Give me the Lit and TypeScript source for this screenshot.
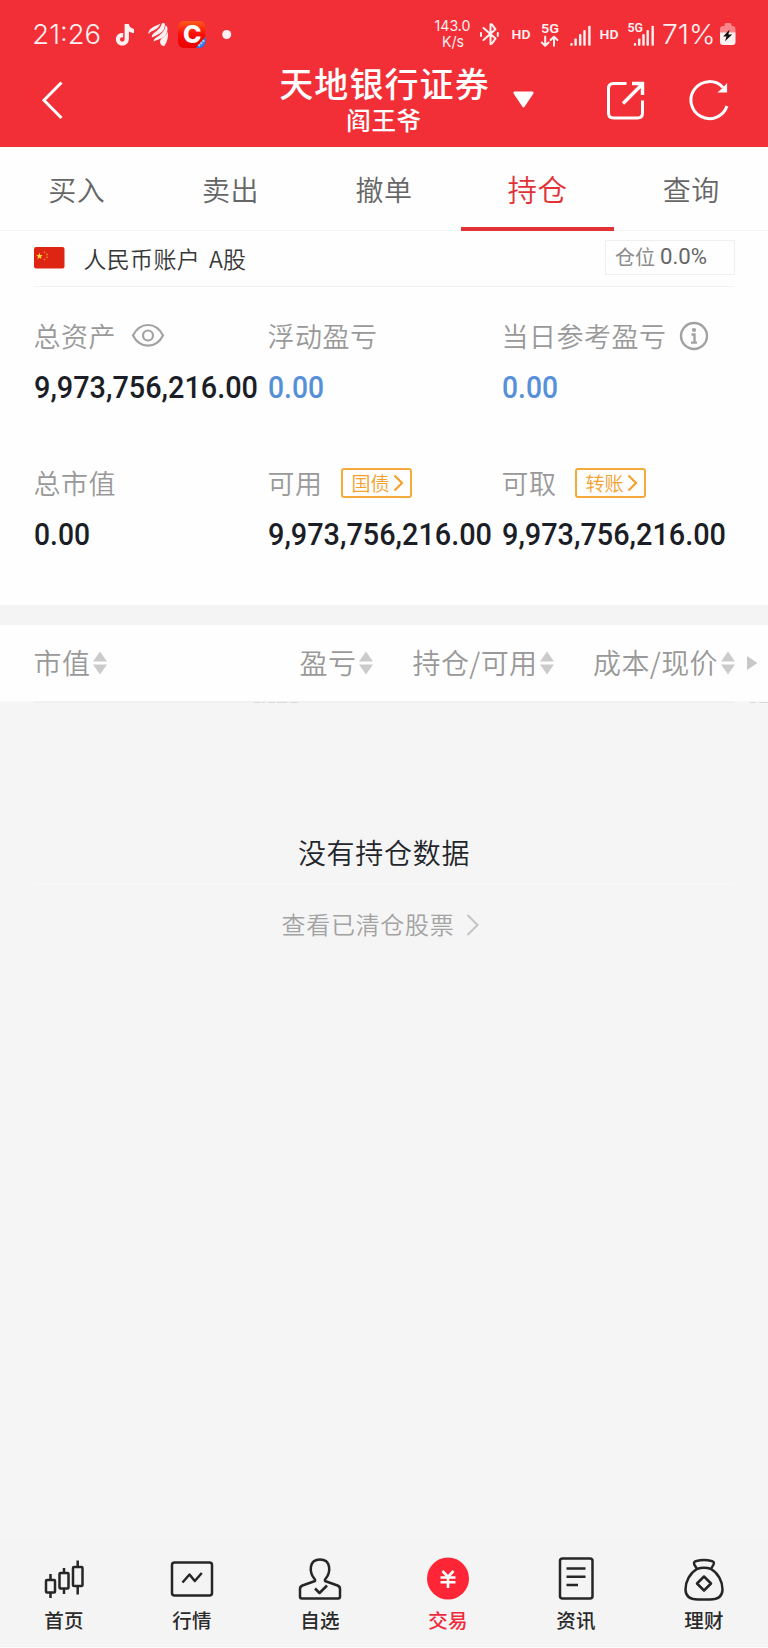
import { LitElement, html, svg, css } from "lit";
import { customElement, property } from "lit/decorators.js";

/** One line of figures set to a fixed width. */
const figures = (text: string, width: number, cls = "") => html`
  <svg class="figures ${cls}" width=${width + 2} height="36" viewBox="0 0 ${width + 2} 36">
    <text x="0" y="28.5" textLength=${width} lengthAdjust="spacingAndGlyphs">${text}</text>
  </svg>`;

const sorter = html`<svg class="sorter" width="14" height="24" viewBox="0 0 14 24">
  <path d="M7 .5 14 10.5H0ZM7 23.5 14 13.5H0Z" fill="#cbcbcb" /></svg>`;

const bars = (xs: number[]) =>
  xs.map((x, i) => svg`<rect x=${x} y=${[43, 38.4, 34, 30, 25.7][i]} width="2.4" height=${45.7 - [43, 38.4, 34, 30, 25.7][i]} rx=".9" />`);

@customElement("status-bar")
export class StatusBar extends LitElement {
  static styles = css`
    :host { display: flex; justify-content: space-between; height: 60px; }
    svg { display: block; fill: #fff1f1; }
    text { font-family: Inter, "Open Sans", sans-serif; }
    .clock { font-size: 27.5px; font-weight: 350; }
    .rate { font-size: 15px; font-weight: 400; }
    .tag { font-family: Roboto, sans-serif; font-size: 13.5px; font-weight: 600; }
    .small { font-size: 12px; }
    .logo { font-family: Inter, sans-serif; font-size: 25px; font-weight: 800; fill: #fff; }
    .line { fill: none; stroke: #fff1f1; stroke-width: 2; stroke-linecap: round; stroke-linejoin: round; }
  `;
  render() {
    return html`
      <svg width="240" height="60" viewBox="0 0 240 60">
        <defs><linearGradient id="g" x1="0" y1="0" x2="0" y2="1">
          <stop offset="0" stop-color="#ff5a1c" /><stop offset=".5" stop-color="#fb0d08" /><stop offset="1" stop-color="#e80000" />
        </linearGradient><clipPath id="c"><rect x="178" y="21" width="27.5" height="27" rx="6" /></clipPath></defs>
        <text class="clock" x="32.300" y="43.800" textLength="68.700" lengthAdjust="spacingAndGlyphs">21:26</text>
        <path d="M124.600 24h4.200c.3 2.600 2.200 4.500 5.200 4.900v4.100c-2 0-3.700-.6-5.100-1.500v6.900c0 4.400-3 7.200-6.700 7.200-3.600 0-6.300-2.800-6.300-6.300 0-4 3.200-6.700 7.300-6.300v4.300c-1.900-.4-3.200.6-3.200 2.100 0 1.300 1 2.200 2.200 2.200 1.500 0 2.400-1 2.400-2.700Z" />
        <path d="M148.500 34.500c-.8-5.500 5.500-8.500 12-10.800-2.400 5.500-6.300 6.200-9.200 7.900-1.200.7-2.200 1.600-2.800 2.900Z" />
        <path d="M151.800 37.500c-.2-6 8-5.600 10.200-14.300 1.300-.3 2.400-.1 3 .6-.3 8.600-5.200 9.600-9.300 11.900-1.600.8-2.900 1.300-3.900 1.800Z" />
        <path d="M153.800 41.600c-.3-5.500 9.900-5 11.900-16.400 1.200.8 1.700 2 1.800 3.300-.2 8-5 9.700-9.500 11.200-1.600.5-3.100 1.100-4.200 1.900Z" />
        <path d="M160.200 43c-1.200-5.500 5.700-5 7.700-11.500.5 6.500-1 11-3.800 14.700-1.900-.4-3.500-1.300-3.900-3.200Z" />
        <g clip-path="url(#c)"><rect x="178" y="21" width="27.500" height="27" fill="url(#g)" />
          <path d="M206 36v13h-11Z" fill="#2d78e6" /><path d="m198.500 46 6-6" stroke="#a9ccff" stroke-width="2.200" stroke-dasharray="2 1" />
        </g>
        <text class="logo" x="183" y="43.300" textLength="18.500" lengthAdjust="spacingAndGlyphs">C</text>
        <circle cx="226.700" cy="34.500" r="4.500" />
      </svg>
      <svg width="340" height="60" viewBox="428 0 340 60">
        <text class="rate" x="434.500" y="31.300" textLength="36" lengthAdjust="spacingAndGlyphs">143.0</text>
        <text class="rate" x="442" y="47.200" textLength="22" lengthAdjust="spacingAndGlyphs">K/s</text>
        <path class="line" d="M483.500 28 495.500 38.600 491.800 43.600 490.500 44.200V24.200L491.800 24.300 495.500 29.300 483.500 40" />
        <path class="line" d="M481 33v3M497.800 33v3" />
        <text class="tag" x="511.500" y="38.600" textLength="19" lengthAdjust="spacingAndGlyphs">HD</text>
        <text class="tag" x="541" y="33" textLength="18" lengthAdjust="spacingAndGlyphs">5G</text>
        <path class="line" d="M545.200 36.500v9M541.800 42.500l3.400 3.200 3.400-3.200M554 45.700v-9M550.600 40l3.400-3.200 3.400 3.200" />
        ${bars([570.3, 574.4, 579, 583.3, 588.2])}
        <text class="tag" x="599.500" y="38.600" textLength="19" lengthAdjust="spacingAndGlyphs">HD</text>
        <text class="tag small" x="627.500" y="32" textLength="15.500" lengthAdjust="spacingAndGlyphs">5G</text>
        ${bars([633.8, 638, 642.3, 646.5, 651.5])}
        <text class="clock" x="662" y="43.800" textLength="53.500" lengthAdjust="spacingAndGlyphs">71%</text>
        <path d="M724.500 26v-1.500q0-1.500 1.500-1.500h4q1.500 0 1.500 1.500V26h1q3 0 3 3v4h-15.500v-4q0-3 3-3Z" fill="#fb8588" />
        <path d="M720 32.500h15.500V42q0 3-3 3H723q-3 0-3-3Z" />
        <path d="m729.500 29.500-6.300 7h3.300l-1.500 4.800 7.200-6.800h-3.800Z" fill="#141414" />
      </svg>`;
  }
}

@customElement("title-bar")
export class TitleBar extends LitElement {
  static styles = css`
    :host { display: grid; grid-template-columns: 279px 210px 279px; height: 87px; color: #fff; }
    svg { display: block; fill: none; stroke: #fff; stroke-width: 3; }
    .back { padding: 20px 0 0 41px; }
    .names { text-align: center; font-family: "Noto Sans CJK SC", sans-serif; font-weight: 500; white-space: nowrap; }
    .title { font-size: 34px; letter-spacing: 1.100px; margin-right: -1px; line-height: 45px; }
    .sub { font-size: 24.500px; letter-spacing: .6px; line-height: 29px; }
    .tools { display: flex; padding: 20px 0 0 24px; }
    .caret { margin-top: 11px; fill: #fff; stroke: none; }
    .share { margin-left: 71px; }
    .refresh { margin-left: 43px; }
  `;
  render() {
    return html`
      <div class="back"><svg width="22" height="40" viewBox="0 0 22 40"><path d="M20.500 2.500 3 20.200 20.500 38" /></svg></div>
      <div class="names"><div class="title">天地银行证券</div><div class="sub">阎王爷</div></div>
      <div class="tools">
        <svg class="caret" width="21" height="17" viewBox="0 0 21 17"><path d="M1.500 .5h18q1.800.5.8 2.200L11.700 15.500q-1.200 1.800-2.400 0L.7 2.700Q-.3 1 1.500.5Z" /></svg>
        <svg class="share" width="40" height="40" viewBox="0 0 40 40">
          <path d="M21.500 3.500H8.500q-5 0-5 5v24.500q0 5 5 5h24q5 0 5-5V20.500" /><path d="M27 3.500h10.500V15M18 23.500 37 4.500" stroke-width="3.400" /></svg>
        <svg class="refresh" width="44" height="42" viewBox="0 0 44 42">
          <path d="M39 26A18.500 18.500 0 1 1 35 7.500" /><path d="M38.500 4.500v7.500H31L35 8.500Z" fill="#fff" stroke-width="1.200" /></svg>
      </div>`;
  }
}

@customElement("trade-tabs")
export class TradeTabs extends LitElement {
  @property({ type: Array }) tabs = ["买入", "卖出", "撤单", "持仓", "查询"];
  @property({ type: Number }) active = 3;
  static styles = css`
    :host { display: grid; grid-template-columns: repeat(5, 1fr); height: 83px; border-bottom: 1.500px solid #f5f5f5; box-sizing: border-box; margin-top: 1px; }
    .tab { box-sizing: border-box; height: 83px; text-align: center; font: 350 28px/82px "Noto Sans CJK SC", sans-serif; letter-spacing: .5px; color: #666; }
    .on { font-size: 29.500px; line-height: 80px; color: #e23236; border-bottom: 4px solid #e23236; }
  `;
  render() {
    return this.tabs.map((t, i) => html`<div class="tab ${i === this.active ? "on" : ""}">${t}</div>`);
  }
}

@customElement("account-row")
export class AccountRow extends LitElement {
  static styles = css`
    :host { display: flex; align-items: flex-start; height: 56px; margin: 0 33px; box-sizing: border-box; border-bottom: 1px solid #f2f2f2; font-family: "Noto Sans CJK SC", sans-serif; }
    .flag { display: block; margin: 16px 0 0 .5px; }
    .name { margin-left: 19px; font-size: 23px; line-height: 34px; padding-top: 10px; letter-spacing: .3px; word-spacing: 3.500px; color: #383838; font-weight: 350; white-space: pre; }
    .box { box-sizing: border-box; display: flex; margin: 9px 0 0 auto; width: 130px; height: 35px; border: 1.500px solid #efefef; padding-left: 9px; color: #8c8c8c; font-size: 20px; line-height: 31px; }
    .pct { margin-left: 5px; fill: #666; font: 400 22px Roboto, sans-serif; }
  `;
  render() {
    return html`
      <svg class="flag" width="31" height="22" viewBox="0 0 31 22">
        <rect width="30.500" height="21.500" rx="2" fill="#de2412" />
        <path d="m5.500 5.800.9 2.100 2.300.2-1.700 1.500.5 2.300-2-1.200-2 1.200.5-2.300-1.700-1.500 2.300-.2Z" fill="#ffd83b" />
        <g fill="#f08a2a"><circle cx="10.500" cy="5.300" r=".9" /><circle cx="13" cy="7.400" r=".9" /><circle cx="13" cy="10.300" r=".9" /><circle cx="10.500" cy="12.600" r=".9" /></g>
      </svg>
      <div class="name">人民币账户 A股</div>
      <div class="box">仓位<svg class="pct" width="50" height="31" viewBox="0 0 50 31"><text x="0" y="23" textLength="47" lengthAdjust="spacingAndGlyphs">0.0%</text></svg></div>`;
  }
}

@customElement("asset-panel")
export class AssetPanel extends LitElement {
  static styles = css`
    :host { display: grid; grid-template-columns: 234px 234px 1fr; grid-template-rows: 147px 147px; height: 318px; padding: 29.500px 0 0 33.500px; box-sizing: border-box; }
    .label { display: flex; align-items: center; height: 38px; font: 350 27px/38px "Noto Sans CJK SC", sans-serif; letter-spacing: .5px; color: #999; white-space: nowrap; }
    .figures { display: block; margin-top: 14.500px; fill: #1b1e26; font: 500 32px Roboto, sans-serif; overflow: visible; }
    .blue { fill: #5690d8; }
    .icon { fill: none; stroke: #a2a2a2; stroke-width: 2.200; margin-left: 15px; margin-top: 1px; }
    .info { margin-left: 12px; stroke-width: 2.400; margin-top: 0; }
    .chip { display: flex; align-items: center; box-sizing: border-box; height: 30px; width: 71px; margin: 0 0 0 18px; padding-left: 9px; border: 2px solid #f5aa3c; border-radius: 3px; font-size: 19px; line-height: 26px; letter-spacing: 0; color: #f5a12d; }
    .chev { margin-left: 3px; fill: none; stroke: #f5a12d; stroke-width: 2.200; }
  `;
  chip(t: string) {
    return html`<span class="chip">${t}<svg class="chev" width="12" height="18" viewBox="0 0 12 18"><path d="m1.500 1.500 7.500 7.500-7.500 7.500" /></svg></span>`;
  }
  render() {
    return html`
      <div><div class="label">总资产<svg class="icon" width="34" height="26" viewBox="0 0 34 26">
        <path d="M2 12.500C9-1.500 25-1.500 32 12.500 25 26 9 26 2 12.500Z" /><circle cx="17" cy="12.500" r="5" /></svg></div>${figures("9,973,756,216.00", 224)}</div>
      <div><div class="label">浮动盈亏</div>${figures("0.00", 56, "blue")}</div>
      <div><div class="label">当日参考盈亏<svg class="icon info" width="30" height="30" viewBox="0 0 30 30">
        <circle cx="15" cy="15" r="13" /><circle cx="15" cy="9" r="2.100" fill="#a2a2a2" stroke="none" /><path d="M12.500 13.500H15.500V21.500M12 21.600H18" /></svg></div>${figures("0.00", 56, "blue")}</div>
      <div><div class="label">总市值</div>${figures("0.00", 56)}</div>
      <div><div class="label">可用${this.chip("国债")}</div>${figures("9,973,756,216.00", 224)}</div>
      <div><div class="label">可取${this.chip("转账")}</div>${figures("9,973,756,216.00", 224)}</div>`;
  }
}

@customElement("holding-list")
export class HoldingList extends LitElement {
  static styles = css`
    :host { display: block; border-top: 20px solid #f4f4f4; font-family: "Noto Sans CJK SC", sans-serif; }
    .head { display: grid; grid-template-columns: 266px 113px 180.500px 154px 19px; padding-left: 33.500px; height: 76px; align-items: center; background: #fefefe; color: #999; font-size: 28px; letter-spacing: .4px; font-weight: 350; line-height: 40px; white-space: nowrap; box-sizing: border-box; padding-bottom: 3px; }
    .col { display: flex; align-items: center; }
    .sorter { margin: 3px 0 0 3px; }
    .more { margin-top: 3px; }
    .rule { display: block; }
    .empty { padding-top: 124px; text-align: center; color: #22252b; font-size: 28px; letter-spacing: .7px; line-height: 50px; font-weight: 350; height: 180px; box-sizing: border-box; }
    .line { height: 2px; margin: 0 33px; background: #f7f7f7; }
    .cleared { display: flex; justify-content: center; align-items: center; height: 76px; color: #a3a3a3; font-size: 24px; letter-spacing: .7px; font-weight: 350; padding-right: 6px; }
    .chev { margin: 3px 0 0 12px; fill: none; stroke: #c4c4c4; stroke-width: 2; }
  `;
  render() {
    return html`
      <div class="head">
        ${["市值", "盈亏", "持仓/可用", "成本/现价"].map((t) => html`<div class="col">${t}${sorter}</div>`)}
        <svg class="more" width="11" height="14" viewBox="0 0 11 14"><path d="M0 0 10.500 7 0 14Z" fill="#c8c8c8" /></svg>
      </div>
      <svg class="rule" width="768" height="2" viewBox="0 0 768 2"><rect width="768" height="2" fill="#f7f7f7" /><rect x="34" width="700" height="2" fill="#f1f1f1" />
        <path d="M254 1.500h6m2 0h3m3 0h7m2 0h10m3 0h8M750 1.500h6m3 0h9" stroke="#dadada" /></svg>
      <div class="empty">没有持仓数据</div>
      <div class="line"></div>
      <div class="cleared">查看已清仓股票<svg class="chev" width="14" height="22" viewBox="0 0 14 22"><path d="m1.500 1 10 10-10 10" /></svg></div>`;
  }
}

const navIcons = [
  svg`<path d="M10.500 22v6M10.500 40v6M24 16v5M24 36v6M37.700 8.500v6M37.700 34v8.500" /><rect x="6" y="28" width="9" height="12.500" rx="1" /><rect x="19.500" y="21" width="9" height="15.500" rx="1" /><rect x="33" y="15" width="9.500" height="19" rx="1" />`,
  svg`<rect x="4" y="10.500" width="40" height="33" rx="2.500" /><path d="m14.500 30.500 7-8 5.300 6.500 7-8" />`,
  svg`<path d="M19 27.500C12.500 20 13 7.500 24 7.500S35.500 20 29 27.500L29 29 41.500 33.500Q44 34.500 44 37V44.500Q44 46.500 42 46.500H6Q4 46.500 4 44.500V37Q4 34.500 6.500 33.500L19 29Z" /><path d="m19 36.500 4.500 4.500 7.500-7.500" />`,
  svg`<circle cx="24" cy="26.500" r="21" fill="#fe2536" stroke="none" /><path d="m18.500 19 5.500 6 5.500-6M24 25v11M16.500 25.500h15M16.500 30.200h15" stroke="#fff" stroke-width="2.600" />`,
  svg`<rect x="8" y="6.500" width="32.500" height="40" rx="2.500" /><path d="M14.500 16.500h19M14.500 24.700h19M14.500 33h11.500" />`,
  svg`<path d="M17 17 14.200 12.300C13.500 10 15 9.300 16.500 9 21 7.800 27 7.800 31.500 9 33.500 9.400 34.500 10.500 33.500 12.500L31 17" /><path d="M17 17C21 15.500 27 15.500 31 17 38 21 42.500 29 42.500 37.500 42.500 44.500 38 47.500 30 47.500H18C10 47.500 5.500 44.500 5.500 37.500 5.500 29 10 21 17 17Z" /><path d="m24 24.500 7 7-7 7-7-7Z" />`,
];

@customElement("bottom-nav")
export class BottomNav extends LitElement {
  static styles = css`
    :host { display: grid; grid-template-columns: repeat(6, 1fr); height: 107px; background: #f4f4f4; margin-top: auto; border-bottom: 1px solid #fbfbfb; box-sizing: border-box; }
    .item { display: flex; flex-direction: column; align-items: center; padding-top: 11px; font: 500 19.500px/28px "Noto Sans CJK SC", sans-serif; letter-spacing: .3px; color: #2a2a2a; }
    .icon { display: block; fill: none; stroke: #262626; stroke-width: 2.500; stroke-linejoin: round; margin-bottom: 3.500px; }
    .on { color: #f02a3c; }
  `;
  render() {
    return ["首页", "行情", "自选", "交易", "资讯", "理财"].map(
      (t, i) => html`<div class="item ${i === 3 ? "on" : ""}"><svg class="icon" width="48" height="50" viewBox="0 0 48 50">${navIcons[i]}</svg>${t}</div>`
    );
  }
}

@customElement("app-root")
export class AppRoot extends LitElement {
  static styles = css`
    :host { display: flex; flex-direction: column; width: 768px; height: 1648px; background: #f5f5f5; overflow: hidden; }
    .top { background: #f22f37; }
    .sheet { background: #fefefe; }
  `;
  render() {
    return html`
      <div class="top"><status-bar></status-bar><title-bar></title-bar></div>
      <div class="sheet"><trade-tabs></trade-tabs><account-row></account-row><asset-panel></asset-panel></div>
      <holding-list></holding-list>
      <bottom-nav></bottom-nav>`;
  }
}
